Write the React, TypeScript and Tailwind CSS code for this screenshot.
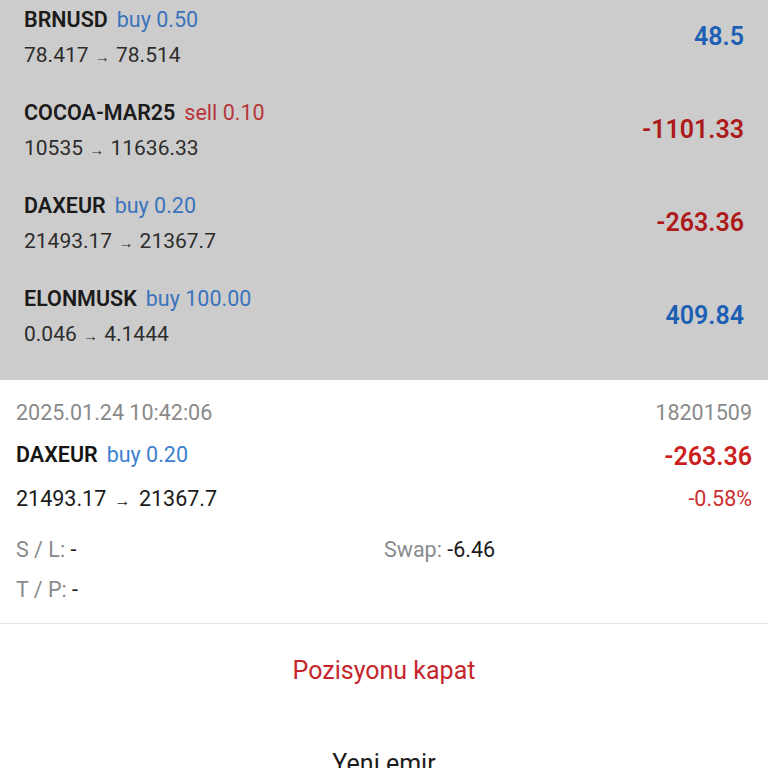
import React from "react";

type Position = {
  symbol: string;
  side: "buy" | "sell";
  volume: string;
  open: string;
  current: string;
  profit: string;
};

const positions: Array<Position> = [
  { symbol: "BRNUSD", side: "buy", volume: "0.50", open: "78.417", current: "78.514", profit: "48.5" },
  { symbol: "COCOA-MAR25", side: "sell", volume: "0.10", open: "10535", current: "11636.33", profit: "-1101.33" },
  { symbol: "DAXEUR", side: "buy", volume: "0.20", open: "21493.17", current: "21367.7", profit: "-263.36" },
  { symbol: "ELONMUSK", side: "buy", volume: "100.00", open: "0.046", current: "4.1444", profit: "409.84" },
];

const PositionRow = ({ p }: { p: Position }) => {
  const negative = p.profit.startsWith("-");
  return (
    <div className="h-[93px] px-6 flex items-center justify-between">
      <div className="flex flex-col gap-[4px]">
        <div className="h-[30px] flex items-center text-[21.5px]">
          <span className="font-semibold text-[#1b1b1b]">{p.symbol}</span>
          <span className={`ml-[9px] ${p.side === "buy" ? "text-[#3a73bd]" : "text-[#b8353a]"}`}>
            {p.side} {p.volume}
          </span>
        </div>
        <div className="h-[30px] text-[21px] leading-[30px] text-[#2c2c2c]">
          {p.open} <span className="mx-[1px] text-[15px]">→</span> {p.current}
        </div>
      </div>
      <div className={`text-[25px] font-semibold -mt-[2px] ${negative ? "text-[#ad1a1a]" : "text-[#1c5fb4]"}`}>
        {p.profit}
      </div>
    </div>
  );
};

const App = () => {
  return (
    <div className="w-[768px] h-[768px] overflow-hidden bg-white" style={{ fontFamily: "Roboto, 'Noto Sans', sans-serif" }}>
      <div className="bg-[#cccccc] h-[380px] overflow-hidden">
        <div className="-mt-[9px]">
          {positions.map((p) => (
            <PositionRow key={p.symbol} p={p} />
          ))}
        </div>
      </div>

      <div className="px-4 pt-[19px]">
        <div className="flex justify-between items-center h-[28px] text-[21.5px] text-[#8a8a8a]">
          <span>2025.01.24 10:42:06</span>
          <span>18201509</span>
        </div>
        <div className="flex justify-between items-center h-[30px] mt-[13px]">
          <div className="text-[21.5px]">
            <span className="font-semibold text-[#151515]">DAXEUR</span>
            <span className="ml-[9px] text-[#3d80d0]">buy 0.20</span>
          </div>
          <span className="text-[25px] font-semibold text-[#cc1f1f] mt-[3px]">-263.36</span>
        </div>
        <div className="flex justify-between items-center h-[30px] mt-[14px] text-[21.5px]">
          <span className="text-[#1b1b1b]">
            21493.17 <span className="mx-[3px] text-[16px]">→</span> 21367.7
          </span>
          <span className="text-[#cc2f2f]">-0.58%</span>
        </div>
        <div className="grid grid-cols-2 h-[30px] mt-[20px] items-center text-[21.5px]">
          <span className="text-[#8a8a8a]">
            S / L: <span className="text-[#1b1b1b]">-</span>
          </span>
          <span className="text-[#8a8a8a]">
            Swap: <span className="text-[#1b1b1b]">-6.46</span>
          </span>
        </div>
        <div className="h-[30px] mt-[11px] flex items-center text-[21.5px] text-[#8a8a8a]">
          <span>
            T / P: <span className="text-[#1b1b1b]">-</span>
          </span>
        </div>
      </div>

      <div className="mt-[18px] border-t border-[#e6e6e6]">
        <div className="h-[93px] flex items-center justify-center text-[25px] text-[#c4262c]">Pozisyonu kapat</div>
        <div className="h-[93px] flex items-center justify-center text-[25px] text-[#1b1b1b]">Yeni emir</div>
      </div>
    </div>
  );
};

export default App;
